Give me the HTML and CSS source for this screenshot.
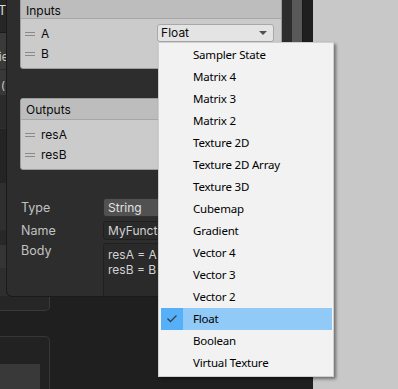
FILE: index.html
```html
<!DOCTYPE html>
<html lang="en">
<head>
    <meta charset="UTF-8">
    <title>Custom Function</title>
    <link rel="stylesheet" href="styles.css">
</head>
<body>
    <div class="app">
        <!-- 图形视图窗口 -->
        <div class="window">
            <!-- 背后的节点(被遮住) -->
            <div class="backdrop">
                <div class="bd bd-title"><span>T</span></div>
                <div class="bd bd-row"><span>ie</span></div>
                <div class="bd bd-row2"><span>(</span></div>
                <div class="bd bd-dark"></div>
                <div class="bd bd-darker"></div>
                <div class="bd bd-mid"></div>
                <div class="bd bd-dark2"></div>
                <div class="bd bd-mid2"></div>
                <div class="bd bd-mid3"></div>
                <div class="bd bd-foot"></div>
                <div class="bd-gap"></div>
                <div class="bd-node">
                    <div class="bd-node-bar"></div>
                </div>
            </div>

            <!-- 节点设置面板 -->
            <div class="board">
                <div class="board-body">
                    <div class="section inputs">
                        <div class="section-head">Inputs</div>
                        <div class="section-rows">
                            <div class="port">
                                <span class="grip"></span><span>A</span>
                                <div class="type-drop">Float<span class="arrow"></span></div>
                            </div>
                            <div class="port"><span class="grip"></span><span>B</span></div>
                        </div>
                    </div>

                    <div class="section outputs">
                        <div class="section-head">Outputs</div>
                        <div class="section-rows">
                            <div class="port"><span class="grip"></span><span>resA</span></div>
                            <div class="port"><span class="grip"></span><span>resB</span></div>
                        </div>
                    </div>

                    <div class="props">
                        <div class="prop">
                            <div class="prop-label">Type</div>
                            <div class="field field-select">String</div>
                        </div>
                        <div class="prop">
                            <div class="prop-label">Name</div>
                            <div class="field">MyFunction</div>
                        </div>
                        <div class="prop prop-body">
                            <div class="prop-label">Body</div>
                            <div class="field field-area">resA = A + 1;<br>resB = B + 1;</div>
                        </div>
                    </div>
                </div>
                <div class="scroll"></div>
            </div>
        </div>

        <div class="side"></div>

        <!-- 类型下拉菜单 -->
        <div class="menu">
            <div class="item">Sampler State</div>
            <div class="item">Matrix 4</div>
            <div class="item">Matrix 3</div>
            <div class="item">Matrix 2</div>
            <div class="item">Texture 2D</div>
            <div class="item">Texture 2D Array</div>
            <div class="item">Texture 3D</div>
            <div class="item">Cubemap</div>
            <div class="item">Gradient</div>
            <div class="item">Vector 4</div>
            <div class="item">Vector 3</div>
            <div class="item">Vector 2</div>
            <div class="item selected">
                <span class="check">
                    <svg width="22" height="22" viewBox="0 0 22 22"><polyline points="6.5,10.5 9.5,13.5 15.5,7.5" fill="none" stroke="#3a3f46" stroke-width="1.4"/></svg>
                </span>Float
            </div>
            <div class="item">Boolean</div>
            <div class="item">Virtual Texture</div>
        </div>
    </div>
</body>
</html>
```

FILE: styles.css
```css
*{
    margin: 0;
    padding: 0;
    box-sizing: border-box;
}
body{
    background-color: #c8c8c8;
    overflow: hidden;
}
.app{
    display: flex;
    width: 398px;
    height: 389px;
    position: relative;
    font-family: Inter, "Noto Sans", sans-serif;
    font-size: 12px;
}
/* 左边的暗色窗口 */
.window{
    width: 313px;
    height: 389px;
    background-color: #1f1f1f;
    position: relative;
}
.side{
    flex: 1;
    background-color: #c8c8c8;
}

/* 背后的节点 */
.backdrop{
    width: 50px;
    display: flex;
    flex-direction: column;
    color: #cfcfcf;
    overflow: hidden;
}
.bd{
    width: 50px;
    overflow: hidden;
    white-space: nowrap;
}
.bd span{
    display: block;
    margin-left: -3px;
}
.bd-title{
    height: 33px;
    background-color: #262626;
    font-size: 13px;
    color: #d8d8d8;
    border-bottom: 1px solid #1a1a1a;
}
.bd-title span{
    margin-left: -2px;
    line-height: 20px;
}
.bd-row{
    height: 37px;
    background-color: #3a3a3a;
    border-bottom: 1px solid #2c2c2c;
    font-size: 11px;
    padding-top: 17px;
}
.bd-row span{
    margin-left: -1px;
}
.bd-row2{
    height: 25px;
    background-color: #383838;
    font-size: 11px;
    padding-top: 8px;
}
.bd-row2 span{
    margin-left: 1px;
}
.bd-dark{
    height: 33px;
    background-color: #2b2b2b;
}
.bd-darker{
    height: 55px;
    background-color: #242424;
    border-top: 1px solid #303030;
}
.bd-mid{
    height: 47px;
    background-color: #2f2f2f;
}
.bd-dark2{
    height: 15px;
    background-color: #282828;
}
.bd-mid2{
    height: 23px;
    background-color: #353535;
}
.bd-mid3{
    height: 28px;
    background-color: #2e2e2e;
}
.bd-foot{
    height: 15px;
    background-color: #262626;
    border: 1px solid #3a3a3a;
    border-left: none;
    border-top: none;
    border-bottom-right-radius: 5px;
}
.bd-gap{
    height: 25px;
}
.bd-node{
    height: 60px;
    background-color: #222222;
    border: 1px solid #363636;
    border-left: none;
    border-bottom: none;
    border-top-right-radius: 5px;
    padding-top: 27px;
}
.bd-node-bar{
    width: 40px;
    height: 30px;
    background-color: #393939;
}

/* 节点设置面板,浮在图上 */
.board{
    position: absolute;
    left: 6px;
    top: 0;
    width: 297px;
    height: 297px;
    display: flex;
    background-color: #2d2d2d;
    border: 1px solid #1a1a1a;
    border-top: none;
    border-radius: 0 0 0 6px;
    overflow: hidden;
}
.board-body{
    width: 287px;
    padding: 0 10px 0 13px;
}
.scroll{
    width: 10px;
    background-color: #595959;
}

/* Inputs / Outputs */
.section{
    background-color: #cbcbcb;
    border: 1px solid #9c9c9c;
    border-radius: 3px;
    color: #0b0b0b;
}
.inputs{
    margin-top: -3px;
}
.outputs{
    margin-top: 29px;
}
.section-head{
    height: 21px;
    line-height: 21px;
    padding-left: 5px;
    background-color: #bdbdbd;
    border-bottom: 1px solid #a6a6a6;
    font-size: 12px;
}
.inputs .section-head{
    line-height: 25px;
}
.section-rows{
    padding: 4px 0 5px;
}
.port{
    height: 20px;
    display: flex;
    align-items: center;
    font-size: 12px;
    padding-top: 1px;
}
.grip{
    width: 10px;
    height: 4px;
    margin: 0 6px 0 4px;
    border-top: 1px solid #8a8a8a;
    border-bottom: 1px solid #8a8a8a;
}
.type-drop{
    margin-left: auto;
    margin-right: 7px;
    align-self: flex-start;
    margin-top: 0;
    width: 117px;
    height: 18px;
    line-height: 16px;
    padding-left: 3px;
    background-color: #e4e4e4;
    border: 1px solid #a8a8a8;
    border-radius: 3px;
    position: relative;
}
.arrow{
    position: absolute;
    right: 6px;
    top: 6px;
    border-left: 4px solid transparent;
    border-right: 4px solid transparent;
    border-top: 4px solid #505050;
}

/* 属性 */
.props{
    margin-top: 28px;
    color: #c2c2c2;
}
.prop{
    display: flex;
    margin-bottom: 4px;
}
.prop-label{
    width: 83px;
    padding-left: 1px;
    line-height: 19px;
    font-size: 12.5px;
}
.field{
    flex: 1;
    height: 19px;
    line-height: 17px;
    padding-left: 4px;
    background-color: #2a2a2a;
    border: 1px solid #202020;
    border-radius: 3px;
    color: #d2d2d2;
    font-size: 12px;
    white-space: nowrap;
    overflow: hidden;
}
.field-select{
    background-color: #515151;
    border-color: #303030;
    color: #e2e2e2;
}
.prop-body{
    margin-top: -1px;
}
.prop-body .prop-label{
    margin-top: -2px;
}
.field-area{
    height: 60px;
    line-height: 15px;
    padding-top: 3px;
}

/* 弹出的菜单 */
.menu{
    position: absolute;
    left: 158px;
    top: 42px;
    width: 176px;
    height: 335px;
    padding: 1px 1px 2px 2px;
    background-color: #f2f2f2;
    border: 1px solid #cfcfcf;
    box-shadow: 2px 2px 3px rgba(0, 0, 0, 0.45);
    font-family: "Noto Sans", sans-serif;
    font-size: 11.5px;
    letter-spacing: -0.2px;
    color: #000;
}
.item{
    height: 22px;
    line-height: 22px;
    padding-left: 32px;
    position: relative;
}
.selected{
    background-color: #91c9f7;
}
.check{
    position: absolute;
    left: 0;
    top: 0;
    width: 22px;
    height: 22px;
    background-color: #56b0f9;
}
.check svg{
    display: block;
}
```
